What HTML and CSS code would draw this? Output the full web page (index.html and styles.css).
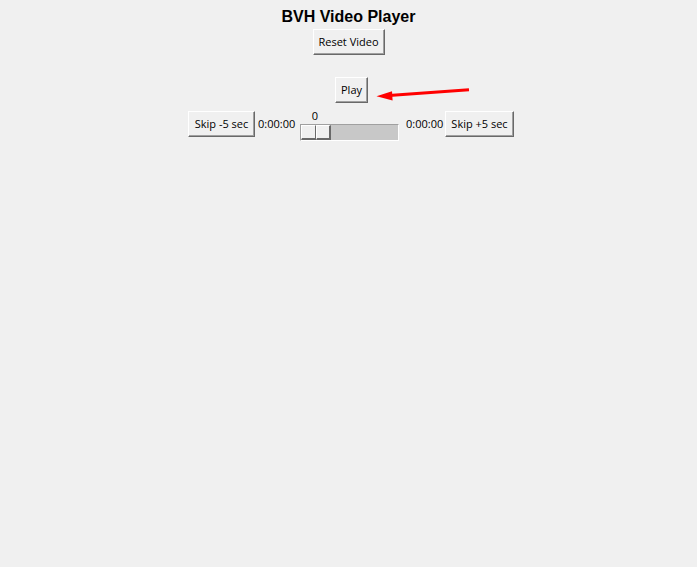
FILE: index.html
```html
<!DOCTYPE html>
<html>
<head>
<meta charset="utf-8">
<link rel="stylesheet" href="styles.css">
</head>
<body>
<div class="app">
  <h1 class="title">BVH Video Player</h1>
  <button class="btn btn-reset">Reset Video</button>
  <button class="btn btn-play">Play</button>
  <div class="controls">
    <button class="btn btn-skip-back">Skip -5 sec</button>
    <span class="time time-left">0:00:00</span>
    <div class="scale">
      <div class="scale-value">0</div>
      <div class="trough">
        <div class="handle"><span class="handle-half"></span><span class="handle-half"></span></div>
      </div>
    </div>
    <span class="time time-right">0:00:00</span>
    <button class="btn btn-skip-fwd">Skip +5 sec</button>
  </div>
  <svg class="arrow" width="697" height="567" viewBox="0 0 697 567">
    <line x1="469" y1="89.8" x2="389" y2="95.6" stroke="#ff0000" stroke-width="3" stroke-linecap="butt"/>
    <polygon points="376.5,96.3 392,91.2 392.6,100.4" fill="#ff0000"/>
  </svg>
</div>
</body>
</html>
```
FILE: styles.css
```css
html, body {
  margin: 0;
  padding: 0;
  background: #f0f0f0;
}

body {
  font-family: "Open Sans", "Noto Sans", sans-serif;
  font-size: 11px;
  color: #000;
}

.app {
  position: relative;
  width: 697px;
  height: 567px;
  display: flex;
  flex-direction: column;
  align-items: center;
}

.title {
  margin: 0;
  padding-top: 8px;
  font-family: "Liberation Sans", Arial, sans-serif;
  font-weight: bold;
  font-size: 16px;
  line-height: 18px;
}

.btn {
  box-sizing: border-box;
  height: 26px;
  margin: 0;
  padding: 0;
  font-family: "Open Sans", "Noto Sans", sans-serif;
  font-size: 11px;
  line-height: 24px;
  color: #000;
  background: #f0f0f0;
  border: 1px solid;
  border-color: #ffffff #696969 #696969 #ffffff;
  box-shadow: inset -1px -1px 0 #a0a0a0;
  text-align: center;
  white-space: nowrap;
}

.btn-reset {
  margin-top: 3px;
  width: 72px;
}

.btn-play {
  margin-top: 22px;
  margin-left: 6px;
  width: 33px;
}

.controls {
  margin-top: 5px;
  padding-left: 5px;
  display: flex;
  align-items: flex-start;
}

.btn-skip-back {
  margin-top: 3px;
  width: 67px;
}

.btn-skip-fwd {
  margin-top: 3px;
  margin-left: 3px;
  width: 69px;
}

.time {
  margin-top: 3px;
  width: 36px;
  line-height: 26px;
  text-align: center;
  white-space: nowrap;
}

.time-left {
  margin-left: 3px;
}

.time-right {
  margin-left: 7px;
}

.scale {
  margin-left: 6px;
  width: 99px;
  display: flex;
  flex-direction: column;
}

.scale-value {
  width: 30px;
  height: 16px;
  line-height: 16px;
  text-align: center;
}

.trough {
  box-sizing: border-box;
  width: 99px;
  height: 17px;
  background: #c8c8c8;
  border: 1px solid;
  border-color: #a0a0a0 #ffffff #ffffff #a0a0a0;
  display: flex;
}

.handle {
  width: 30px;
  height: 15px;
  display: flex;
}

.handle-half {
  box-sizing: border-box;
  width: 15px;
  height: 15px;
  background: #f0f0f0;
  border-top: 1px solid #ffffff;
  border-left: 1px solid #ffffff;
  border-right: 1px solid #696969;
  border-bottom: 2px solid #696969;
}

.handle-half + .handle-half {
  border-right-width: 2px;
}

.arrow {
  position: absolute;
  left: 0;
  top: 0;
  pointer-events: none;
}
```
